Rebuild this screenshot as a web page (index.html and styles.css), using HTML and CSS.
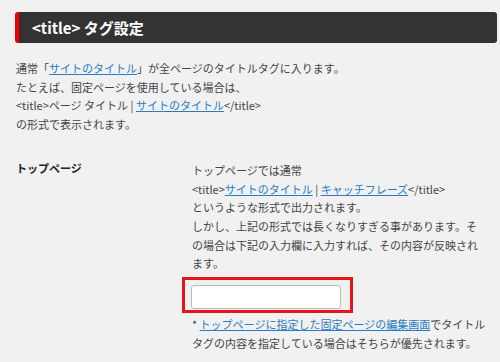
FILE: index.html
```html
<!DOCTYPE html>
<html lang="ja">
<head>
<meta charset="utf-8">
<link rel="stylesheet" href="styles.css">
</head>
<body>
<div class="wrap">
  <h2 class="section-title">&lt;title&gt; タグ設定</h2>
  <p class="intro">通常「<a href="#">サイトのタイトル</a>」が全ページのタイトルタグに入ります。<br>たとえば、固定ページを使用している場合は、<br>&lt;title&gt;ページ タイトル | <a href="#">サイトのタイトル</a>&lt;/title&gt;<br>の形式で表示されます。</p>
  <div class="row">
    <div class="label">トップページ</div>
    <div class="field">
      <p class="desc">トップページでは通常<br>&lt;title&gt;<a href="#">サイトのタイトル</a> | <a href="#">キャッチフレーズ</a>&lt;/title&gt;<br>というような形式で出力されます。<br>しかし、上記の形式では長くなりすぎる事があります。その場合は下記の入力欄に入力すれば、その内容が反映されます。</p>
      <div class="highlight"><input class="text-input" type="text"></div>
      <p class="note">* <a href="#">トップページに指定した固定ページの編集画面</a>でタイトルタグの内容を指定している場合はそちらが優先されます。</p>
    </div>
  </div>
</div>
</body>
</html>
```

FILE: styles.css
```css
html, body {
  margin: 0;
  padding: 0;
  background: #f1f1f1;
}
body {
  font-family: "Noto Sans CJK JP", "Noto Sans", sans-serif;
  font-size: 11px;
  color: #444;
}
.wrap {
  padding: 12px 3px 0 15px;
}
.section-title {
  margin: 0;
  height: 31px;
  line-height: 31px;
  background: #333;
  color: #fff;
  font-size: 15px;
  font-weight: bold;
  border-left: 4px solid #e00;
  border-radius: 3px;
  padding-left: 13px;
}
a {
  color: #2a7bbf;
  text-decoration: underline;
}
.intro {
  margin: 16px 0 0 1px;
  line-height: 18.7px;
}
.row {
  display: flex;
  margin-top: 27px;
  margin-left: 1px;
}
.label {
  width: 176px;
  flex: none;
  font-weight: bold;
  line-height: 18.7px;
  margin-top: -2px;
  color: #222;
}
.field {
  width: 295px;
}
.desc {
  margin: 0;
  line-height: 18.7px;
}
.highlight {
  margin: 4px 0 0 -10px;
  width: 171px;
  height: 36px;
  box-sizing: border-box;
  border: 3px solid #e8141c;
  padding: 5px 0 0 6px;
}
.text-input {
  display: block;
  box-sizing: border-box;
  width: 150px;
  height: 24px;
  border: 1px solid #bbb;
  border-radius: 3px;
  background: #fff;
  margin: 0;
  padding: 0;
}
.note {
  margin: 2px 0 0;
  line-height: 18.7px;
}
```
